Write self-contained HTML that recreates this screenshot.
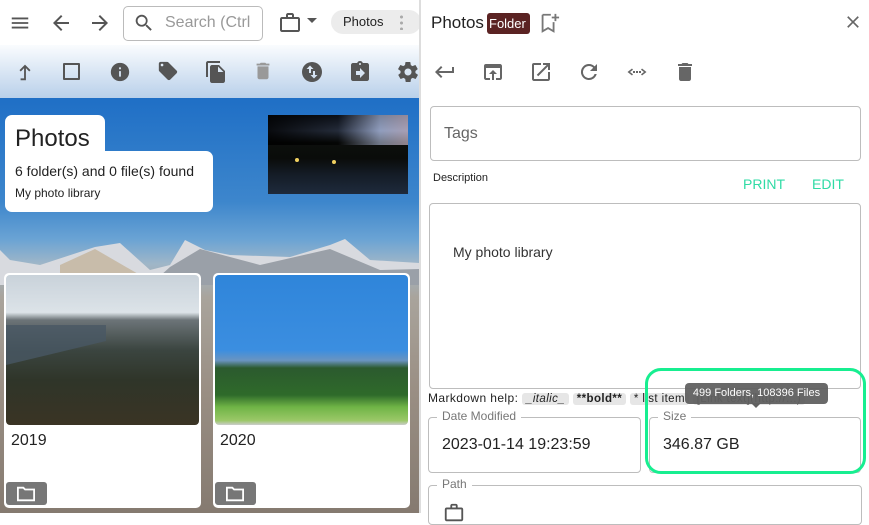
<!DOCTYPE html>
<html><head><meta charset="utf-8"><style>
*{box-sizing:border-box;margin:0;padding:0}
body{width:869px;height:513px;overflow:hidden;font-family:"Liberation Sans",sans-serif;background:#fff;position:relative}
.a{position:absolute}
svg{display:block}
.ic{fill:#555}
.fs{position:absolute;border:1px solid #bdbdbd;border-radius:4px}
.lg{position:absolute;background:#fff;padding:0 5px;font-size:12px;color:#777}
.chip{background:#e6e6e6;border-radius:3px;padding:0 4px;font-size:11.5px}
</style></head><body>
<!-- LEFT -->
<div class="a" style="left:0;top:0;width:419px;height:513px;overflow:hidden">
 <div class="a" style="left:0;top:98px;width:419px;height:415px;background:linear-gradient(#1f6fc6 0%,#3d86cc 25%,#6aa3d4 34%,#9fb6c8 40%,#a9a49c 48%,#9a8f84 70%,#857a70 100%)"></div>
 <svg class="a" style="left:0;top:235px" width="419" height="50"><path d="M0 15 L10 25 L40 30 L95 12 L120 8 L150 35 L170 30 L185 5 L205 15 L230 20 L290 22 L330 10 L345 4 L370 25 L419 28 L419 50 L0 50Z" fill="#d8dadf"/><path d="M60 30 L95 14 L140 40 L60 45Z" fill="#c8bcaa"/><path d="M170 32 L200 14 L260 30 L330 14 L380 35 L419 34 L419 50 L150 50Z" fill="#9aa0a8"/></svg>
 <div class="a" style="left:0;top:0;width:419px;height:45px;background:#fff"></div>
 <div class="a" style="left:0;top:45px;width:419px;height:53px;background:linear-gradient(#fafcfe,#b9d0ea)"></div>
 <svg class="a" style="left:9px;top:12px" width="22" height="22" viewBox="0 0 24 24"><path class="ic" d="M3 6h18v2H3zm0 5h18v2H3zm0 5h18v2H3z"/></svg>
 <svg class="a" style="left:49px;top:11px" width="24" height="24" viewBox="0 0 24 24"><path class="ic" d="M20 11H7.8l5.6-5.6L12 4l-8 8 8 8 1.4-1.4L7.8 13H20z"/></svg>
 <svg class="a" style="left:88px;top:11px" width="24" height="24" viewBox="0 0 24 24"><path class="ic" d="M4 11h12.2l-5.6-5.6L12 4l8 8-8 8-1.4-1.4 5.6-5.6H4z"/></svg>
 <div class="a" style="left:123px;top:6px;width:140px;height:35px;border:1px solid #bbb;border-radius:5px"></div>
 <svg class="a" style="left:133px;top:12px" width="22" height="22" viewBox="0 0 24 24"><path class="ic" d="M15.5 14h-.8l-.3-.3A6.5 6.5 0 1 0 9.5 16c1.6 0 3.1-.6 4.2-1.6l.3.3v.8l5 5 1.5-1.5-5-5zm-6 0C7 14 5 12 5 9.5S7 5 9.5 5 14 7 14 9.5 12 14 9.5 14z"/></svg>
 <div class="a" style="left:165px;top:14px;font-size:16px;color:#999;white-space:nowrap;width:96px;overflow:hidden">Search (Ctrl</div>
 <svg class="a" style="left:278px;top:11px" width="24" height="24" viewBox="0 0 24 24"><path class="ic" d="M14 6V4h-4v2h4zM4 8v11h16V8H4zm16-2c1.1 0 2 .9 2 2v11c0 1.1-.9 2-2 2H4c-1.1 0-2-.9-2-2V8c0-1.1.9-2 2-2h4V4c0-1.1.9-2 2-2h4c1.1 0 2 .9 2 2v2h4z"/></svg>
 <svg class="a" style="left:306px;top:17px" width="12" height="8"><path d="M1 1h10L6 6z" fill="#555"/></svg>
 <div class="a" style="left:331px;top:10px;width:90px;height:24px;background:#ececec;border-radius:12px;font-size:13px;padding:4px 0 0 12px;color:#222">Photos</div>
 <div class="a" style="left:400px;top:14px;width:3px;height:16px;background:radial-gradient(circle,#aaa 1.4px,transparent 1.6px) 0 0/3px 6px"></div>
 <!-- toolbar -->
 <svg class="a" style="left:14px;top:60px" width="22" height="24" viewBox="0 0 24 24"><path class="ic" d="M11 21V7.8L7.4 11.4 6 10l6-6 6 6-1.4 1.4L13 7.8V21zM7.2 21v-2h4v2z"/></svg>
 <div class="a" style="left:63px;top:63px;width:17px;height:17px;border:2px solid #555;border-radius:1px"></div>
 <svg class="a" style="left:109px;top:61px" width="22" height="22" viewBox="0 0 24 24"><path class="ic" d="M12 2a10 10 0 1 0 0 20 10 10 0 0 0 0-20zm1 15h-2v-6h2zm0-8h-2V7h2z"/></svg>
 <svg class="a" style="left:157px;top:60px" width="22" height="22" viewBox="0 0 24 24"><path class="ic" d="M21.4 11.6l-9-9C12.1 2.2 11.6 2 11 2H4c-1.1 0-2 .9-2 2v7c0 .6.2 1.1.6 1.4l9 9c.4.4.9.6 1.4.6s1-.2 1.4-.6l7-7c.4-.4.6-.9.6-1.4s-.2-1.1-.6-1.4zM5.5 7C4.7 7 4 6.3 4 5.5S4.7 4 5.5 4 7 4.7 7 5.5 6.3 7 5.5 7z"/></svg>
 <svg class="a" style="left:204px;top:60px" width="24" height="24" viewBox="0 0 24 24"><path class="ic" d="M16 1H4c-1.1 0-2 .9-2 2v14h2V3h12zm-1 4l6 6v10c0 1.1-.9 2-2 2H8c-1.1 0-2-.9-2-2V7c0-1.1.9-2 2-2zm-1 7h5.5L14 6.5z"/></svg>
 <svg class="a" style="left:252px;top:60px" width="22" height="22" viewBox="0 0 24 24"><path fill="#999" d="M6 19c0 1.1.9 2 2 2h8c1.1 0 2-.9 2-2V7H6zM19 4h-3.5l-1-1h-5l-1 1H5v2h14z"/></svg>
 <svg class="a" style="left:300px;top:60px" width="24" height="24" viewBox="0 0 24 24"><path class="ic" d="M12 2a10 10 0 1 0 0 20 10 10 0 0 0 0-20zM6.5 9L10 5.5 13.5 9H11v4H9V9zm11 6L14 18.5 10.5 15H13v-4h2v4z"/></svg>
 <svg class="a" style="left:348px;top:60px" width="24" height="24" viewBox="0 0 24 24"><path class="ic" d="M19 3h-4.2C14.4 1.8 13.3 1 12 1s-2.4.8-2.8 2H5c-1.1 0-2 .9-2 2v14c0 1.1.9 2 2 2h14c1.1 0 2-.9 2-2V5c0-1.1-.9-2-2-2zm-7 0c.6 0 1 .4 1 1s-.4 1-1 1-1-.4-1-1 .4-1 1-1zm0 15v-3H8v-4h4V8l5 5z"/></svg>
 <svg class="a" style="left:396px;top:60px" width="24" height="24" viewBox="0 0 24 24"><path class="ic" d="M19.4 13c0-.3.1-.6.1-1s0-.7-.1-1l2.1-1.6c.2-.2.2-.4.1-.6l-2-3.5c-.1-.2-.4-.3-.6-.2l-2.5 1c-.5-.4-1.1-.7-1.7-1l-.4-2.6c0-.3-.2-.5-.5-.5h-4c-.3 0-.5.2-.5.4l-.4 2.7c-.6.2-1.1.6-1.700 1l-2.5-1c-.2-.1-.5 0-.6.2l-2 3.5c-.1.2-.1.5.1.6L4.6 11c0 .3-.1.7-.1 1s0 .7.1 1l-2.1 1.6c-.2.2-.2.4-.1.6l2 3.5c.1.2.4.3.6.2l2.5-1c.5.4 1.1.7 1.7 1l.4 2.7c0 .2.2.4.5.4h4c.3 0 .5-.2.5-.4l.4-2.7c.6-.3 1.2-.6 1.7-1l2.5 1c.2.1.5 0 .6-.2l2-3.5c.1-.2.1-.5-.1-.6zM12 15.5c-1.9 0-3.5-1.6-3.5-3.5s1.6-3.5 3.5-3.5 3.5 1.6 3.5 3.5-1.6 3.5-3.5 3.5z"/></svg>
 <!-- title boxes -->
 <div class="a" style="left:5px;top:115px;width:100px;height:42px;background:#fff;border-radius:7px 7px 0 0"></div>
 <div class="a" style="left:5px;top:151px;width:208px;height:61px;background:#fff;border-radius:0 7px 7px 7px"></div>
 <div class="a" style="left:15px;top:125px;font-size:24px;color:#222">Photos</div>
 <div class="a" style="left:15px;top:163px;font-size:14px;color:#222">6 folder(s) and 0 file(s) found</div>
 <div class="a" style="left:15px;top:186px;font-size:12px;color:#222">My photo library</div>
 <div class="a" style="left:268px;top:115px;width:140px;height:79px;background:linear-gradient(#1a2436 0%,#5a6c90 20%,#0c0f0c 35%,#0a0c0a 55%,#141c26 75%,#1e2a3c 100%)"></div>
 <div class="a" style="left:268px;top:115px;width:140px;height:30px;background:linear-gradient(90deg,rgba(0,0,0,.9) 0%,rgba(0,0,0,.6) 50%,rgba(180,190,220,.6) 80%,rgba(200,180,195,.7) 100%)"></div>
 <div class="a" style="left:295px;top:158px;width:4px;height:4px;background:#f0d060;border-radius:2px"></div>
 <div class="a" style="left:332px;top:160px;width:4px;height:4px;background:#f0d060;border-radius:2px"></div>
 <!-- cards -->
 <div class="a" style="left:4px;top:273px;width:197px;height:235px;background:#fff;border-radius:5px"></div>
 <div class="a" style="left:6px;top:275px;width:193px;height:150px;border-radius:4px;background:linear-gradient(#c9d2da 0%,#dce3e8 25%,#6c7478 30%,#3b4540 50%,#2f3529 70%,#3a3424 100%)"></div>
 <div class="a" style="left:6px;top:325px;width:100px;height:40px;background:#485864;opacity:.8;clip-path:polygon(0 0,100% 0,100% 40%,0 100%)"></div>
 <div class="a" style="left:11px;top:432px;font-size:16px;color:#222">2019</div>
 <div class="a" style="left:6px;top:482px;width:41px;height:23px;background:#777;border-radius:3px"></div>
 <svg class="a" style="left:15px;top:485px" width="22" height="18" viewBox="0 0 24 20"><path fill="none" stroke="#fff" stroke-width="2" d="M3 3h6l2 2h10v12H3z"/></svg>
 <div class="a" style="left:213px;top:273px;width:197px;height:235px;background:#fff;border-radius:5px"></div>
 <div class="a" style="left:215px;top:275px;width:193px;height:150px;border-radius:4px;background:linear-gradient(#2f85da 0%,#3b8ee0 50%,#6a94c0 57%,#2c5a2e 62%,#2e6a2a 80%,#6fb446 88%,#9bc868 97%,#ccc 100%)"></div>
 <div class="a" style="left:220px;top:432px;font-size:16px;color:#222">2020</div>
 <div class="a" style="left:215px;top:482px;width:41px;height:23px;background:#777;border-radius:3px"></div>
 <svg class="a" style="left:224px;top:485px" width="22" height="18" viewBox="0 0 24 20"><path fill="none" stroke="#fff" stroke-width="2" d="M3 3h6l2 2h10v12H3z"/></svg>
</div>
<div class="a" style="left:419px;top:0;width:2px;height:513px;background:#ddd"></div>
<!-- RIGHT -->
<div class="a" style="left:431px;top:13px;font-size:17px;color:#222">Photos</div>
<div class="a" style="left:487px;top:13px;width:43px;height:21px;background:#5b2323;border-radius:3px;color:#fff;font-size:13px;padding:3px 0 0 2px">Folder</div>
<svg class="a" style="left:538px;top:12px" width="22" height="22" viewBox="0 0 24 24"><path fill="none" stroke="#777" stroke-width="2" d="M5 3h9v0M5 3v18l6-3.5 6 3.5V11"/><path fill="#777" d="M18 2v3h-3v2h3v3h2V7h3V5h-3V2z"/></svg>
<svg class="a" style="left:843px;top:12px" width="20" height="20" viewBox="0 0 24 24"><path fill="#666" d="M19 6.4L17.6 5 12 10.6 6.4 5 5 6.4 10.6 12 5 17.6 6.4 19 12 13.4 17.6 19 19 17.6 13.4 12z"/></svg>
<svg class="a" style="left:433px;top:60px" width="24" height="24" viewBox="0 0 24 24"><path fill="#666" d="M19 7v4H5.8l3.6-3.6L8 6l-6 6 6 6 1.4-1.4L5.8 13H21V7z"/></svg>
<svg class="a" style="left:481px;top:60px" width="24" height="24" viewBox="0 0 24 24"><path fill="#666" d="M19 4H5a2 2 0 0 0-2 2v12c0 1.1.9 2 2 2h4v-2H5V8h14v10h-4v2h4c1.1 0 2-.9 2-2V6c0-1.1-.9-2-2-2zm-7 6l-4 4h3v6h2v-6h3z"/></svg>
<svg class="a" style="left:529px;top:60px" width="24" height="24" viewBox="0 0 24 24"><path fill="#666" d="M19 19H5V5h7V3H5a2 2 0 0 0-2 2v14c0 1.1.9 2 2 2h14c1.1 0 2-.9 2-2v-7h-2zM14 3v2h3.6l-9.8 9.8 1.4 1.4L19 6.4V10h2V3z"/></svg>
<svg class="a" style="left:577px;top:60px" width="24" height="24" viewBox="0 0 24 24"><path fill="#666" d="M17.6 6.4A8 8 0 0 0 12 4a8 8 0 1 0 7.7 10h-2.1A6 6 0 1 1 12 6c1.7 0 3.1.7 4.2 1.8L13 11h7V4z"/></svg>
<svg class="a" style="left:625px;top:60px" width="24" height="24" viewBox="0 0 24 24"><path fill="#666" d="M7 8.5L2.5 12 7 15.5l1-1.2L5 12l3-2.3zm10 0l-1 1.2 3 2.3-3 2.3 1 1.2 4.5-3.5zM8 11h2v2H8zm3 0h2v2h-2zm3 0h2v2h-2z"/></svg>
<svg class="a" style="left:673px;top:60px" width="24" height="24" viewBox="0 0 24 24"><path fill="#666" d="M6 19c0 1.1.9 2 2 2h8c1.1 0 2-.9 2-2V7H6zM19 4h-3.5l-1-1h-5l-1 1H5v2h14z"/></svg>
<div class="fs" style="left:430px;top:106px;width:431px;height:55px"></div>
<div class="a" style="left:444px;top:125px;font-size:16px;color:#666">Tags</div>
<div class="a" style="left:433px;top:172px;font-size:11px;color:#222">Description</div>
<div class="a" style="left:743px;top:176px;font-size:14px;color:#2fdba5">PRINT</div>
<div class="a" style="left:812px;top:176px;font-size:14px;color:#2fdba5">EDIT</div>
<div class="fs" style="left:429px;top:203px;width:432px;height:186px"></div>
<div class="a" style="left:453px;top:244px;font-size:14px;color:#333">My photo library</div>
<div class="a" style="left:428px;top:391px;font-size:12px;color:#222;white-space:nowrap;letter-spacing:.4px">Markdown help: <span class="chip"><i>_italic_</i></span> <span class="chip"><b>**bold**</b></span> <span class="chip">* list item</span> <span class="chip">[Link text](http://...)</span></div>
<div class="fs" style="left:428px;top:417px;width:213px;height:56px"></div>
<div class="lg" style="left:437px;top:409px">Date Modified</div>
<div class="a" style="left:442px;top:436px;font-size:16px;color:#222">2023-01-14 19:23:59</div>
<div class="fs" style="left:649px;top:417px;width:212px;height:56px"></div>
<div class="lg" style="left:658px;top:409px">Size</div>
<div class="a" style="left:663px;top:436px;font-size:16px;color:#222">346.87 GB</div>
<div class="fs" style="left:428px;top:485px;width:434px;height:40px"></div>
<div class="lg" style="left:437px;top:477px">Path</div>
<svg class="a" style="left:443px;top:502px" width="22" height="22" viewBox="0 0 24 24"><path fill="#555" d="M14 6V4h-4v2h4zM4 8v11h16V8H4zm16-2c1.1 0 2 .9 2 2v11c0 1.1-.9 2-2 2H4c-1.1 0-2-.9-2-2V8c0-1.1.9-2 2-2h4V4c0-1.1.9-2 2-2h4c1.1 0 2 .9 2 2v2h4z"/></svg>
<div class="a" style="left:645px;top:368px;width:221px;height:106px;border:3px solid #17ee90;border-radius:16px"></div>
<div class="a" style="left:685px;top:383px;width:143px;height:21px;background:#616161;border-radius:4px;color:#fff;font-size:11px;text-align:center;padding-top:4px;opacity:.95">499 Folders, 108396 Files</div>
<div class="a" style="left:751px;top:403px;width:0;height:0;border-left:5px solid transparent;border-right:5px solid transparent;border-top:5px solid #616161"></div>
</body></html>
